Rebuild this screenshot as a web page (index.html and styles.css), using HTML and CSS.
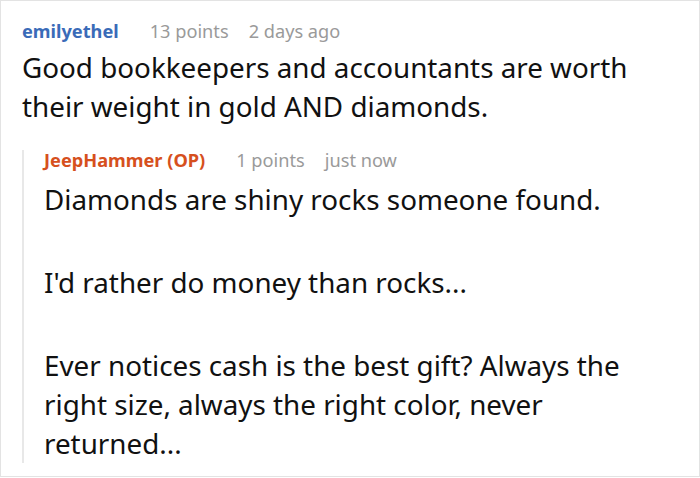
FILE: index.html
```html
<!DOCTYPE html>
<html>
<head>
<meta charset="utf-8">
<link rel="stylesheet" href="styles.css">
</head>
<body>
<div class="frame">
  <div class="comment">
    <div class="meta">
      <span class="author">emilyethel</span>
      <span class="points">13 points</span>
      <span class="time">2 days ago</span>
    </div>
    <div class="body">
      <p>Good bookkeepers and accountants are worth their weight in gold AND diamonds.</p>
    </div>
    <div class="reply">
      <div class="meta">
        <span class="author op">JeepHammer (OP)</span>
        <span class="points">1 points</span>
        <span class="time">just now</span>
      </div>
      <div class="body">
        <p>Diamonds are shiny rocks someone found.</p>
        <p>I'd rather do money than rocks...</p>
        <p>Ever notices cash is the best gift? Always the right size, always the right color, never returned...</p>
      </div>
    </div>
  </div>
</div>
</body>
</html>
```
FILE: styles.css
```css
html, body {
  margin: 0;
  padding: 0;
  background: #fff;
}
.frame {
  width: 700px;
  height: 477px;
  box-sizing: border-box;
  border: 1px solid #e3e3e3;
  padding: 17px 20px 0 21px;
  overflow: hidden;
  font-family: "Noto Sans", "Open Sans", sans-serif;
  color: #111;
}
.meta {
  font-size: 18.2px;
  line-height: 26px;
  display: flex;
  align-items: baseline;
}
.author {
  font-weight: 700;
  color: #3a6bb8;
}
.author.op {
  color: #d6501d;
}
.points {
  color: #9a9a9a;
  margin-left: 31px;
}
.time {
  color: #9a9a9a;
  margin-left: 20px;
}
.body {
  font-size: 27.8px;
  line-height: 39px;
  margin-top: 4px;
}
.body p {
  margin: 0;
}
.reply {
  margin-top: 24px;
  border-left: 2px solid #e8e8e8;
  padding-left: 20px;
}
.reply .meta {
  line-height: 20px;
}
.reply .body {
  margin-top: 10px;
}
.reply .body p + p {
  margin-top: 44px;
}
```
